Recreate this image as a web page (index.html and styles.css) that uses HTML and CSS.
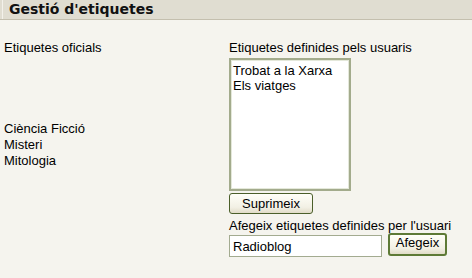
FILE: index.html
```html
<!DOCTYPE html>
<html lang="ca">
<head>
<meta charset="utf-8">
<title>Gestió d'etiquetes</title>
<link rel="stylesheet" href="styles.css">
</head>
<body>
<div class="header"><h1 class="title">Gestió d'etiquetes</h1></div>
<div class="content">
  <div class="col-left">
    <div class="label">Etiquetes oficials</div>
    <ul class="official">
      <li>Ciència Ficció</li>
      <li>Misteri</li>
      <li>Mitologia</li>
    </ul>
  </div>
  <div class="col-right">
    <div class="label">Etiquetes definides pels usuaris</div>
    <div class="listbox">
      <div class="opt">Trobat a la Xarxa</div>
      <div class="opt">Els viatges</div>
    </div>
    <button class="btn btn-del" type="button">Suprimeix</button>
    <div class="label label-add">Afegeix etiquetes definides per l'usuari</div>
    <div class="add-row">
      <input class="text-in" type="text" value="Radioblog">
      <button class="btn btn-add" type="button">Afegeix</button>
    </div>
  </div>
</div>
</body>
</html>
```
FILE: styles.css
```css
html, body {
  margin: 0;
  padding: 0;
  background: #f5f4ee;
}
body {
  font-family: "Liberation Sans", Arial, sans-serif;
  font-size: 13px;
  color: #000;
  width: 472px;
  height: 278px;
  overflow: hidden;
}
.header {
  height: 19px;
  background: #e0ddd1;
  border-bottom: 1px solid #c4bfae;
  box-shadow: inset 2px 0 0 #e0ddd1, inset 3px 0 0 #f3f1ea;
  display: flex;
  align-items: center;
}
.title {
  margin: 0 0 0 9px;
  font-family: "DejaVu Sans", Verdana, sans-serif;
  font-weight: bold;
  font-size: 14px;
  line-height: 19px;
  color: #111;
}
.content {
  display: flex;
  padding: 20px 0 0 4px;
}
.col-left {
  width: 225px;
}
.label {
  line-height: 15px;
  height: 15px;
}
.official {
  list-style: none;
  margin: 66px 0 0 0;
  padding: 0;
}
.official li {
  line-height: 16px;
}
.col-right {
  display: flex;
  flex-direction: column;
  align-items: flex-start;
}
.listbox {
  margin-top: 3px;
  width: 118px;
  height: 129px;
  background: #fff;
  border: 2px solid #a3ab8c;
  box-shadow: inset 0 0 0 1px #e4e8da;
  padding: 0;
  box-sizing: content-box;
}
.opt {
  padding-left: 2px;
  line-height: 15px;
}
.opt:first-child {
  margin-top: 3px;
}
.btn {
  font-family: "Liberation Sans", Arial, sans-serif;
  font-size: 13px;
  color: #000;
  background: linear-gradient(#fffff8, #f2f0e4 70%, #e1dcc8);
  border: 1px solid #4b5f2a;
  border-radius: 3px;
  padding: 0;
  margin: 0;
}
.btn-del {
  margin-top: 2px;
  width: 84px;
  height: 21px;
}
.label-add {
  margin-top: 4px;
}
.add-row {
  display: flex;
  align-items: flex-start;
  margin-top: 2px;
}
.text-in {
  margin: 0;
  width: 153px;
  height: 22px;
  box-sizing: border-box;
  border: 1px solid #a3ab90;
  background: #fff;
  font-family: "Liberation Sans", Arial, sans-serif;
  font-size: 13px;
  padding: 0 3px;
  color: #000;
}
.btn-add {
  margin-left: 6px;
  margin-top: -2px;
  width: 59px;
  height: 23px;
  border: 2px solid #5e7a36;
  line-height: 16px;
  padding-bottom: 3px;
}
```
